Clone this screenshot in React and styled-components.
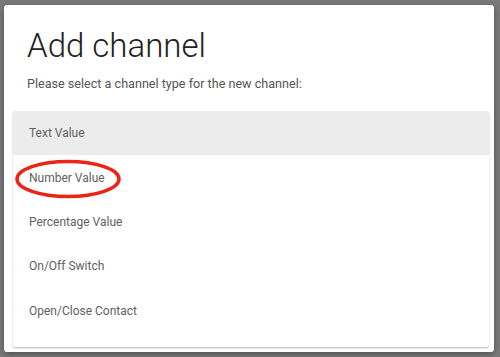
import React from "react";
import styled, { createGlobalStyle } from "styled-components";

const GlobalStyle = createGlobalStyle`
  html, body {
    margin: 0;
    padding: 0;
    width: 500px;
    height: 357px;
    overflow: hidden;
    background: #7a7a7a;
    font-family: Roboto, "Liberation Sans", sans-serif;
  }
`;

const Backdrop = styled.div`
  width: 500px;
  height: 357px;
  padding: 5px 6px 5px 4px;
  box-sizing: border-box;
`;

const Dialog = styled.div`
  height: 100%;
  background: #fff;
  border-radius: 3px;
  box-shadow: 0 2px 6px rgba(0, 0, 0, 0.35);
  padding: 0 5px 5px 9px;
  box-sizing: border-box;
  display: flex;
  flex-direction: column;
`;

const Title = styled.h2`
  margin: 20px 0 0 14px;
  font-size: 33px;
  font-weight: 300;
  line-height: 42px;
  color: #222;
`;

const Subtitle = styled.p`
  margin: 9px 0 0 14px;
  font-size: 12.6px;
  line-height: 16px;
  color: #555;
`;

const List = styled.div`
  margin-top: 19px;
  flex: 1;
  background: #fff;
  border-radius: 2px;
  box-shadow: 0 1px 2px rgba(0, 0, 0, 0.28);
  display: flex;
  flex-direction: column;
  overflow: hidden;
`;

const Row = styled.div`
  position: relative;
  height: 44.4px;
  flex: none;
  display: flex;
  align-items: center;
  padding-left: 16px;
  font-size: 12px;
  color: #616161;
  background: ${(p) => (p.$active ? "#ececec" : "#fff")};
`;

const Circle = styled.svg`
  position: absolute;
  left: 2px;
  top: 5px;
  overflow: visible;
`;

const items = [
  "Text Value",
  "Number Value",
  "Percentage Value",
  "On/Off Switch",
  "Open/Close Contact",
];

export default function App() {
  return (
    <>
      <GlobalStyle />
      <Backdrop>
        <Dialog>
          <Title>Add channel</Title>
          <Subtitle>Please select a channel type for the new channel:</Subtitle>
          <List>
            {items.map((label, i) => (
              <Row key={label} $active={i === 0}>
                {label}
                {i === 1 && (
                  <Circle width="106" height="38">
                    <ellipse
                      cx="53"
                      cy="19"
                      rx="51"
                      ry="17.5"
                      fill="none"
                      stroke="#ec2416"
                      strokeWidth="3.5"
                    />
                  </Circle>
                )}
              </Row>
            ))}
          </List>
        </Dialog>
      </Backdrop>
    </>
  );
}
